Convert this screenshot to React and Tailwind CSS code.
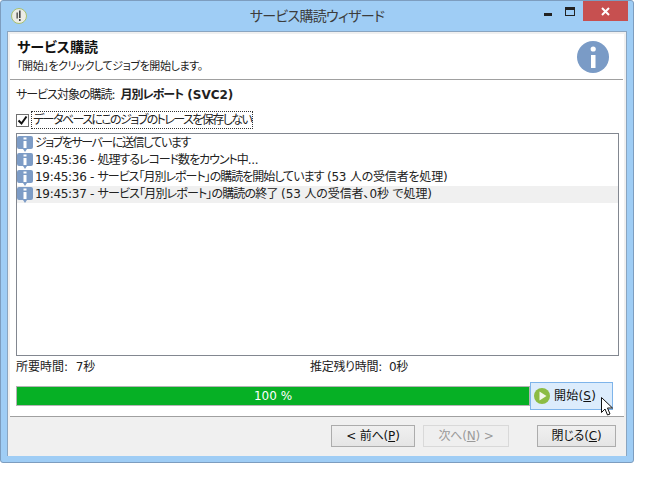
const FONT = { fontFamily: '"DejaVu Sans", "Noto Sans CJK JP", sans-serif' };

function InfoSmall() {
  return (
    <svg width="16" height="17" viewBox="0 0 16 17" className="shrink-0">
      <path d="M2 1h12a2 2 0 0 1 2 2v9a2 2 0 0 1-2 2h-4l-2 3-2-3H2a2 2 0 0 1-2-2V3a2 2 0 0 1 2-2z" fill="#7d9cc6" />
      <rect x="6.5" y="6" width="3" height="7" fill="#fff" />
      <rect x="6.5" y="2.5" width="3" height="2" fill="#fff" />
    </svg>
  );
}

function LogRow({ children, active }) {
  return (
    <div className={`flex h-[17px] items-center gap-[2px] text-[12px] leading-[17px] tracking-[-0.3px] whitespace-nowrap text-[#222] ${active ? "bg-[#f0f0f0]" : ""}`}>
      <InfoSmall />
      <span>{children}</span>
    </div>
  );
}

function Btn({ children, disabled, w, className = "" }) {
  return (
    <div className={`flex h-[22px] items-center justify-center border text-[12px] tracking-[-0.2px] ${w} ${disabled ? "border-[#d9d9d9] bg-[#efefef] text-[#9a9a9a]" : "border-[#acacac] bg-gradient-to-b from-[#f0f0f0] to-[#e5e5e5] text-[#111]"} ${className}`}>
      {children}
    </div>
  );
}

export default function App() {
  return (
    <div className="h-[490px] w-[656px] overflow-hidden bg-white [font-feature-settings:'palt']" style={FONT}>
      <div className="flex h-[463px] w-[634px] flex-col rounded-[3px] border border-[#7d9dbf] bg-[#9fcdf5]">
        {/* title bar */}
        <div className="relative flex h-[30px] shrink-0 items-center justify-center">
          <svg width="18" height="18" viewBox="0 0 18 18" className="absolute left-[9px] top-[6px]">
            <circle cx="9" cy="9" r="7.5" fill="#ecece6" stroke="#a8c070" strokeWidth="1" />
            <path d="M9 3.5h1.6v7.5H9zM6.5 5.5h1.3v6H6.5z" fill="#444" />
            <rect x="9" y="12" width="1.6" height="2" fill="#444" />
          </svg>
          <span className="text-[14px] tracking-[-0.7px] text-[#3c3c3c]">サービス購読ウィザード</span>
          <div className="absolute right-[5px] top-0 flex items-start">
            <div className="mr-[13px] mt-[12px] h-[3px] w-[8px] bg-[#222]" />
            <div className="mr-[8px] mt-[6px] h-[9px] w-[10px] border border-t-[3px] border-[#222]" />
            <div className="flex h-[20px] w-[45px] items-center justify-center bg-[#c75050]">
              <svg width="9" height="9" viewBox="0 0 9 9">
                <path d="M1 1l7 7M8 1l-7 7" stroke="#fff" strokeWidth="2" />
              </svg>
            </div>
          </div>
        </div>

        {/* client */}
        <div className="mx-[6px] mb-[6px] flex min-h-0 flex-1 flex-col border border-[#8aa5c0] bg-white">
          <div className="flex flex-1 flex-col border-l-[2px] border-r-[2px] border-t-[2px] border-[#f0f0f0]">
            {/* header */}
            <div className="relative mr-[1px] h-[46px] shrink-0 border-b border-[#a0a0a0] pl-[7px] pt-[3px]">
              <div className="text-[14px] font-bold leading-[20px] text-[#111]">サービス購読</div>
              <div className="mt-[2px] text-[11px] leading-[15px] tracking-[-0.4px] text-[#222]">「開始」をクリックしてジョブを開始します。</div>
              <svg width="32" height="32" viewBox="0 0 32 32" className="absolute right-[14px] top-[7px]">
                <circle cx="16" cy="16" r="16" fill="#7a9bc6" />
                <rect x="14" y="14" width="4.5" height="13" fill="#fff" />
                <circle cx="16.2" cy="8" r="2.6" fill="#fff" />
              </svg>
            </div>

            {/* body */}
            <div className="flex min-h-0 flex-1 flex-col pl-[6px] pr-[5px]">
              <div className="mt-[6px] flex h-[18px] items-center text-[12px] whitespace-nowrap text-[#222]">
                <span className="tracking-[-1px]">サービス対象の購読:</span>
                <span className="ml-[6px] font-bold">
                  <span className="tracking-[-1px]">月別レポート</span> (SVC2)
                </span>
              </div>
              <div className="mt-[7px] flex h-[18px] items-center">
                <div className="flex h-[13px] w-[13px] items-center justify-center border border-[#707070] bg-white">
                  <svg width="11" height="11" viewBox="0 0 11 11">
                    <path d="M1.5 5.5l3 3 5-7" fill="none" stroke="#111" strokeWidth="2" />
                  </svg>
                </div>
                <span className="ml-[2px] border border-dotted border-[#333] px-[1px] text-[12px] leading-[16px] tracking-[-1.55px] whitespace-nowrap text-[#222]">
                  データベースにこのジョブのトレースを保存しない
                </span>
              </div>

              {/* log */}
              <div className="mt-[4px] h-[223px] w-[603px] shrink-0 border border-[#828790] bg-white pt-[1px]">
                <LogRow><span className="tracking-[-1.45px]">ジョブをサーバーに送信しています</span></LogRow>
                <LogRow>19:45:36 - <span className="tracking-[-1.05px]">処理するレコード数をカウント中</span>...</LogRow>
                <LogRow>19:45:36 - <span className="tracking-[-1px]">サービス「月別レポート」の購読を開始しています</span> <span className="tracking-[-0.2px]">(53 人の受信者を処理)</span></LogRow>
                <LogRow active>19:45:37 - <span className="tracking-[-0.85px]">サービス「月別レポート」の購読の終了</span> <span className="tracking-[-0.1px]">(53 人の受信者、0秒 で処理)</span></LogRow>
              </div>

              {/* times */}
              <div className="mt-[2px] flex h-[18px] items-center text-[12px] text-[#222]">
                <span className="w-[294px]">所要時間:&nbsp;&nbsp;7秒</span>
                <span className="tracking-[-0.3px]">推定残り時間:&nbsp;&nbsp;0秒</span>
              </div>

              {/* progress */}
              <div className="relative mt-[6px] flex h-[28px] items-center">
                <div className="flex h-[20px] w-[514px] items-center justify-center border border-[#b4b4b4] bg-[#06b025] text-[12px] text-white">
                  100 %
                </div>
                <div className="flex h-[28px] w-[83px] items-center border border-[#7eb4ea] bg-[#dcecfc] pl-[3px] text-[12px] text-[#111]">
                  <svg width="16" height="16" viewBox="0 0 16 16">
                    <circle cx="8" cy="8" r="8" fill="#8cbc44" />
                    <path d="M5.5 3.5l7 4.5-7 4.5z" fill="#f4f8ec" />
                  </svg>
                  <span className="ml-[4px] tracking-[0.2px]">開始(<u>S</u>)</span>
                </div>
                <svg width="12" height="19" viewBox="0 0 12 19" className="absolute left-[585px] top-[15px]">
                  <path d="M.5.5v15l3.5-3.5 2.5 6 2.5-1-2.5-6h5z" fill="#fff" stroke="#111" strokeWidth="1" />
                </svg>
              </div>
            </div>

            {/* footer */}
            <div className="mt-[6px] flex h-[40px] shrink-0 items-start bg-[#f0f0f0]">
              <div className="flex w-full items-start border-t border-[#a0a0a0] pl-[321px] pt-[8px]">
                <Btn w="w-[84px]">&lt; 前へ(<u>P</u>)</Btn>
                <Btn disabled w="w-[86px]" className="ml-[8px]">次へ(<u>N</u>) &gt;</Btn>
                <Btn w="w-[79px]" className="ml-[28px]">閉じる(<u>C</u>)</Btn>
              </div>
            </div>
          </div>
        </div>
      </div>
    </div>
  );
}
